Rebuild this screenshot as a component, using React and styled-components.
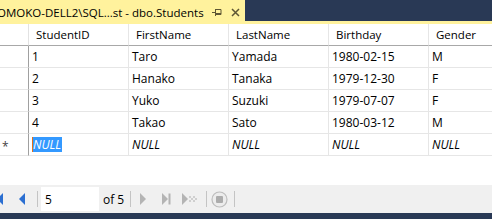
import styled, { createGlobalStyle } from 'styled-components'

const GlobalStyle = createGlobalStyle`
  html, body {
    margin: 0;
    padding: 0;
    background: #ffffff;
  }
  body {
    width: 492px;
    height: 219px;
    overflow: hidden;
    font-family: "Open Sans", "Noto Sans", sans-serif;
  }
`

const Frame = styled.div`
  width: 492px;
  height: 219px;
  display: flex;
  flex-direction: column;
  overflow: hidden;
`

const TabStrip = styled.div`
  height: 21px;
  background: #293955;
  display: flex;
  flex-shrink: 0;
`

const Tab = styled.div`
  width: 245px;
  background: #fff29d;
  display: flex;
  align-items: center;
  overflow: hidden;
`

const TabTitle = styled.span`
  margin-left: -3px;
  font-size: 11.5px;
  color: #000;
  white-space: nowrap;
  padding-top: 3px;
`

const Spacer = styled.div`
  flex: 1;
`

const TabIcon = styled.svg`
  flex-shrink: 0;
  margin-right: ${p => p.$gap}px;
  margin-top: 3px;
`

const TabLine = styled.div`
  height: 3px;
  background: #fff29d;
  flex-shrink: 0;
`

const Grid = styled.div`
  flex: 1;
  display: grid;
  grid-template-columns: 29px repeat(5, 100px);
  grid-auto-rows: 22px;
  align-content: start;
  background: #fff;
  overflow: hidden;
  font-size: 12px;
`

const Cell = styled.div`
  box-sizing: border-box;
  border-right: 1px solid ${p => (p.$rowHead ? (p.$header ? '#e2e2e2' : '#a0a0a0') : '#e6e6e6')};
  border-bottom: 1px solid ${p => (p.$header ? '#a8a8a8' : '#e6e6e6')};
  padding-left: ${p => (p.$header ? 7 : 3)}px;
  display: flex;
  align-items: center;
  white-space: nowrap;
  overflow: hidden;
  color: #000;
  font-size: ${p => (p.$header ? 11.5 : 12)}px;
  font-style: ${p => (p.$null ? 'italic' : 'normal')};
`

const Star = styled.span`
  font-size: 12px;
  color: #444;
  margin-left: -1px;
  padding-top: 3px;
`

const Selected = styled.span`
  background: #3399ff;
  color: #fff;
  border-left: 1px solid #e0701a;
  padding-right: 1px;
  line-height: 15px;
`

const Toolbar = styled.div`
  height: 28px;
  flex-shrink: 0;
  background: #f0f0f0;
  display: flex;
  align-items: center;
`

const NavButton = styled.svg`
  flex-shrink: 0;
  display: block;
  margin-left: ${p => p.$ml || 0}px;
`

const Separator = styled.div`
  width: 1px;
  height: 16px;
  background: #c4c4c4;
  margin-left: ${p => p.$ml}px;
  flex-shrink: 0;
`

const PositionInput = styled.div`
  width: 58px;
  height: 24px;
  margin-left: 3px;
  background: #fff;
  box-sizing: border-box;
  padding-left: 4px;
  display: flex;
  align-items: center;
  font-size: 12px;
  color: #000;
  flex-shrink: 0;
`

const OfLabel = styled.span`
  font-size: 12px;
  color: #000;
  margin-left: 4px;
  width: 23px;
  flex-shrink: 0;
  white-space: nowrap;
`

const BottomBar = styled.div`
  height: 6px;
  background: #293955;
  flex-shrink: 0;
`

const columns = ['StudentID', 'FirstName', 'LastName', 'Birthday', 'Gender']

const rows = [
  ['1', 'Taro', 'Yamada', '1980-02-15', 'M'],
  ['2', 'Hanako', 'Tanaka', '1979-12-30', 'F'],
  ['3', 'Yuko', 'Suzuki', '1979-07-07', 'F'],
  ['4', 'Takao', 'Sato', '1980-03-12', 'M'],
]

const BLUE = '#2b6fd1'
const GRAY = '#b4b4b4'

export default function App() {
  return (
    <Frame>
      <GlobalStyle />
      <TabStrip>
        <Tab>
          <TabTitle>OMOKO-DELL2\SQL...st - dbo.Students</TabTitle>
          <Spacer />
          <TabIcon width="10" height="8" viewBox="0 0 10 8" $gap={9}>
            <path d="M0 4.5H3M3.5 1V8M3.5 1.5H9V6.5H3.5M3.5 5.5H9" stroke="#5e5634" strokeWidth="1" fill="none" />
          </TabIcon>
          <TabIcon width="9" height="9" viewBox="0 0 9 9" $gap={5}>
            <path d="M1 1L8 8M8 1L1 8" stroke="#5e5634" strokeWidth="1.5" fill="none" />
          </TabIcon>
        </Tab>
      </TabStrip>
      <TabLine />
      <Grid>
        <Cell $header $rowHead />
        {columns.map(c => (
          <Cell key={c} $header>{c}</Cell>
        ))}
        {rows.map(r => [
          <Cell key={r[0] + 'h'} $rowHead />,
          ...r.map((v, i) => <Cell key={r[0] + i}>{v}</Cell>),
        ])}
        <Cell $rowHead><Star>*</Star></Cell>
        <Cell $null><Selected>NULL</Selected></Cell>
        <Cell $null>NULL</Cell>
        <Cell $null>NULL</Cell>
        <Cell $null>NULL</Cell>
        <Cell $null>NULL</Cell>
      </Grid>
      <Toolbar>
        {/* first record, mostly off the left edge */}
        <NavButton width="9" height="12" viewBox="0 0 9 12" $ml={-6}>
          <path d="M9 0V12L3 6Z" fill={BLUE} />
        </NavButton>
        <NavButton width="6" height="12" viewBox="0 0 6 12" $ml={16}>
          <path d="M6 0V12L0 6Z" fill={BLUE} />
        </NavButton>
        <Separator $ml={12} />
        <PositionInput>5</PositionInput>
        <OfLabel>of 5</OfLabel>
        <Separator $ml={4} />
        <NavButton width="6" height="12" viewBox="0 0 6 12" $ml={9}>
          <path d="M0 0V12L6 6Z" fill={GRAY} />
        </NavButton>
        <NavButton width="9" height="12" viewBox="0 0 9 12" $ml={16}>
          <path d="M0 0V12L6 6Z" fill={GRAY} />
          <rect x="6.5" y="0.5" width="2" height="11" fill={GRAY} />
        </NavButton>
        <NavButton width="15" height="12" viewBox="0 0 15 12" $ml={11}>
          <path d="M0 0V12L6 6Z" fill={GRAY} />
          <g fill="#cfcfcf">
            <rect x="7" y="3" width="2" height="2" />
            <rect x="9" y="5" width="2" height="2" />
            <rect x="11" y="3" width="2" height="2" />
            <rect x="7" y="7" width="2" height="2" />
            <rect x="11" y="7" width="2" height="2" />
            <rect x="13" y="5" width="2" height="2" />
          </g>
        </NavButton>
        <Separator $ml={9} />
        <NavButton width="17" height="17" viewBox="0 0 17 17" $ml={4}>
          <circle cx="8.5" cy="8.5" r="7.5" fill="#ececec" stroke="#bdbdbd" strokeWidth="1.2" />
          <rect x="5" y="5" width="7" height="7" rx="1" fill="#acacac" />
        </NavButton>
        <Separator $ml={6} />
      </Toolbar>
      <BottomBar />
    </Frame>
  )
}
